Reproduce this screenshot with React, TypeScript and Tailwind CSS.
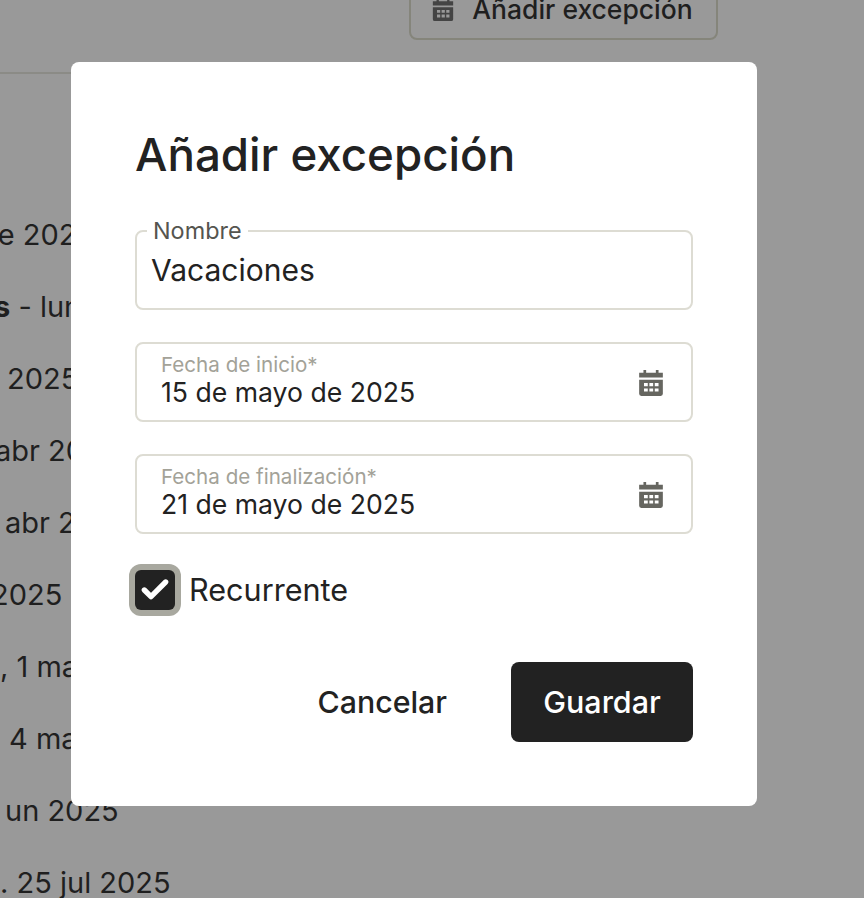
import { Check } from 'lucide-react';

const font = "font-['Inter','Noto_Sans',sans-serif]";

// filas de la lista que queda detrás del modal
const rows = [
  { text: 'de 2025', cls: '-ml-[20px]' },
  { text: 'Vacaciones - lun', cls: '-ml-[155px]', bold: true },
  { text: '2025', cls: 'ml-[7px]' },
  { text: 'abr 2025', cls: '-ml-[5px]' },
  { text: 'abr 2025', cls: 'ml-[5px]' },
  { text: '2025', cls: '-ml-[9px]' },
  { text: ', 1 may 2025', cls: 'ml-[0px]' },
  { text: '4 may 2025', cls: 'ml-[9px]' },
  { text: 'un 2025', cls: 'ml-[5px]' },
  { text: '. 25 jul 2025', cls: 'ml-[0px]' },
];

function CalendarIcon({ className }: { className: string }) {
  return (
    <svg viewBox="0 0 26 26" className={className} fill="currentColor">
      <path d="M6 1h2.5v2.5h9V1H20v2.5h4V8H2V3.5h4z" />
      <path fillRule="evenodd" d="M2 10h22v13a2 2 0 0 1-2 2H4a2 2 0 0 1-2-2zm4.5 3v3h3.5v-3zm5 0v3h3.5v-3zm5 0v3h3.5v-3zm-10 5v3h3.5v-3zm5 0v3h3.5v-3zm5 0v3h3.5v-3z" />
    </svg>
  );
}

function DateField({ label, value }: { label: string; value: string }) {
  return (
    <div className="h-20 rounded-lg border-2 border-[#dddcd3] pl-[24px] pr-[26px] flex items-center justify-between">
      <div className="flex flex-col -mt-[4px]">
        <span className="text-[20.6px] leading-[24px] text-[#a3a298]">{label}</span>
        <span className="text-[26.6px] leading-[30px] text-[#222222]">{value}</span>
      </div>
      <CalendarIcon className="w-[28px] h-[28px] mt-[2px] text-[#666660]" />
    </div>
  );
}

export default function App() {
  return (
    <div className={`${font} relative h-[898px] w-[864px] overflow-hidden bg-[#999999] text-[#1f1f1f]`}>
      {/* fondo: botón y lista */}
      <div className="flex justify-end pr-[146px] h-[40px]">
        <div className="w-[309px] h-[80px] -mt-[40px] shrink-0 rounded-lg border-2 border-[#85857b] flex items-end justify-center gap-[17px] pb-[14px]">
          <CalendarIcon className="w-[24px] h-[24px] text-[#444444] mb-[2px] -ml-[3px]" />
          <span className="text-[26.5px] leading-[30px] font-medium whitespace-nowrap">Añadir excepción</span>
        </div>
      </div>
      <div className="mt-[32px] h-[2px] w-[100px] bg-[#8b8b86]" />
      <div className="mt-[143px] flex flex-col gap-[36px]">
        {rows.map((r, i) => (
          <div key={i} className={`h-[36px] leading-[36px] text-[29px] whitespace-nowrap ${r.cls}`}>
            {r.bold ? <><b className="font-bold">Vacaciones</b> - lun</> : r.text}
          </div>
        ))}
      </div>

      {/* modal */}
      <div className="absolute left-[71px] top-[62px] w-[686px] h-[744px] rounded-lg bg-white px-[64px] pt-[64px]">
        <h2 className="text-[45.7px] leading-[58px] font-[550] text-[#222222] whitespace-nowrap">Añadir excepción</h2>

        <div className="relative mt-[46px] h-20 rounded-lg border-2 border-[#dddcd3] pl-[14px] pt-[16px]">
          <span className="absolute left-[10px] -top-[14px] bg-white px-[6px] text-[23.4px] leading-[26px] text-[#55554f]">Nombre</span>
          <span className="text-[30px] leading-[44px] text-[#222222]">Vacaciones</span>
        </div>

        <div className="mt-[32px] flex flex-col gap-[32px]">
          <DateField label="Fecha de inicio*" value="15 de mayo de 2025" />
          <DateField label="Fecha de finalización*" value="21 de mayo de 2025" />
        </div>

        <div className="mt-[30px] flex items-center gap-[8px] -ml-[6px]">
          <div className="w-[52px] h-[52px] rounded-[12px] bg-[#a8a89f] flex items-center justify-center">
            <div className="w-[40px] h-[40px] rounded-[6px] bg-[#222222] flex items-center justify-center">
              <Check className="w-[32px] h-[32px] text-white" strokeWidth={4} />
            </div>
          </div>
          <span className="text-[30.6px] leading-[36px] text-[#222222]">Recurrente</span>
        </div>

        <div className="mt-[46px] flex justify-end items-center gap-[64px]">
          <button className="pt-[2px] text-[30.3px] font-medium text-[#222222]">Cancelar</button>
          <button className="w-[182px] h-20 rounded-lg bg-[#222222] text-white text-[30.5px] font-medium">Guardar</button>
        </div>
      </div>
    </div>
  );
}
